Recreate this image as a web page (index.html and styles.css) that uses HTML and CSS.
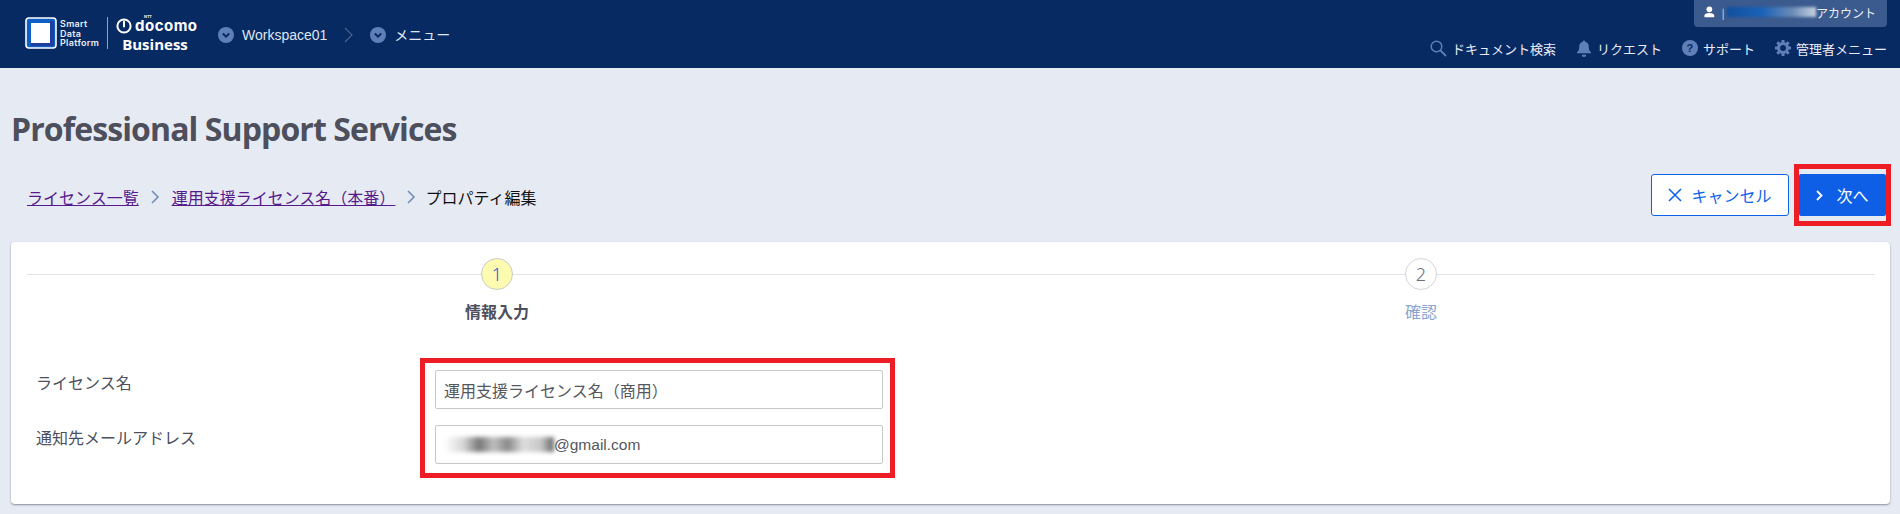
FILE: index.html
```html
<!DOCTYPE html>
<html lang="ja">
<head>
<meta charset="utf-8">
<title>Professional Support Services</title>
<link rel="stylesheet" href="styles.css">
</head>
<body>
<header class="topbar">
  <div class="brand">
    <svg class="brand-mark" width="32" height="32" viewBox="0 0 32 32"><rect x="1" y="1" width="30" height="30" rx="3" fill="#0f5fc4" stroke="#fff" stroke-width="1.6"/><path d="M25 4h2.500A1.500 1.500 0 0 1 29 5.500v22a1.500 1.500 0 0 1-1.500 1.500H6v-3h19z" fill="#1f3f9e"/><rect x="6" y="6" width="19" height="20" fill="#fff"/></svg>
    <div class="brand-name"><span>Smart</span><span>Data</span><span>Platform</span></div>
    <div class="brand-sep"></div>
    <div class="docomo">
      <div class="docomo-top"><svg width="16" height="16" viewBox="0 0 16 16"><circle cx="8" cy="8" r="6.600" fill="none" stroke="#fff" stroke-width="2"/><path d="M8 3.500v5" stroke="#fff" stroke-width="2" stroke-linecap="round"/></svg><span class="docomo-word">docomo<span class="ntt">NTT</span></span></div>
      <div class="docomo-bottom">Business</div>
    </div>
  </div>
  <nav class="crumbs-top">
    <svg class="drop" width="16" height="16" viewBox="0 0 16 16"><circle cx="8" cy="8" r="8" fill="#5f7fb8"/><path d="M4.800 6.500 8 9.700l3.200-3.200" fill="none" stroke="#0a2a63" stroke-width="2"/></svg>
    <span class="crumb-label">Workspace01</span>
    <svg class="crumb-sep" width="9" height="16" viewBox="0 0 9 16"><path d="M1 1l7 7-7 7" fill="none" stroke="#46628f" stroke-width="1.200"/></svg>
    <svg class="drop" width="16" height="16" viewBox="0 0 16 16"><circle cx="8" cy="8" r="8" fill="#5f7fb8"/><path d="M4.800 6.500 8 9.700l3.200-3.200" fill="none" stroke="#0a2a63" stroke-width="2"/></svg>
    <span class="crumb-label">メニュー</span>
  </nav>
  <div class="top-right">
    <div class="account">
      <svg width="11" height="12" viewBox="0 0 12 13"><circle cx="6" cy="3.500" r="3.200" fill="#fff"/><path d="M0.500 12.500v-2C0.500 8.500 2.500 7.500 6 7.500s5.500 1 5.500 3v2z" fill="#fff"/></svg>
      <span class="account-bar">|</span>
      <span class="account-blur"></span>
      <span class="account-name">アカウント</span>
    </div>
    <div class="tools">
      <div class="tool"><svg width="17" height="17" viewBox="0 0 17 17"><circle cx="6.500" cy="6.500" r="5.300" fill="none" stroke="#5f7fb8" stroke-width="1.500"/><path d="M10.500 10.500 16 16" stroke="#5f7fb8" stroke-width="1.800"/></svg><span>ドキュメント検索</span></div>
      <div class="tool"><svg width="16" height="17" viewBox="0 0 16 17"><path d="M8 0.500c.8 0 1.200.5 1.200 1.300 2.500.6 3.600 2.500 3.600 5 0 3 .7 4.200 2.200 5.500v1H1v-1c1.500-1.300 2.200-2.500 2.200-5.500 0-2.500 1.100-4.400 3.600-5C6.800 1 7.200.5 8 .5z" fill="#5f7fb8"/><path d="M5.800 14.800h4.400a2.200 2.200 0 0 1-4.400 0z" fill="#5f7fb8"/></svg><span>リクエスト</span></div>
      <div class="tool"><span class="help">?</span><span>サポート</span></div>
      <div class="tool"><svg width="16" height="16" viewBox="0 0 16 16"><circle cx="8" cy="8" r="4.500" fill="none" stroke="#5f7fb8" stroke-width="3"/><g stroke="#5f7fb8" stroke-width="3"><path d="M8 0v3M8 13v3M0 8h3M13 8h3M2.300 2.300l2.100 2.100M11.600 11.600l2.100 2.100M13.700 2.300l-2.100 2.100M4.400 11.600l-2.100 2.100"/></g></svg><span>管理者メニュー</span></div>
    </div>
  </div>
</header>

<main class="page">
  <h1 class="title">Professional Support Services</h1>
  <div class="action-row">
    <nav class="crumbs">
      <a class="crumb-link" href="#">ライセンス一覧</a>
      <svg class="crumb-arrow" width="9" height="14" viewBox="0 0 9 14"><path d="M1 1l6 6-6 6" fill="none" stroke="#6f8db8" stroke-width="1.600"/></svg>
      <a class="crumb-link" href="#">運用支援ライセンス名（本番）</a>
      <svg class="crumb-arrow" width="9" height="14" viewBox="0 0 9 14"><path d="M1 1l6 6-6 6" fill="none" stroke="#6f8db8" stroke-width="1.600"/></svg>
      <span class="crumb-current">プロパティ編集</span>
    </nav>
    <div class="actions">
      <button class="btn btn-cancel" type="button"><svg width="14" height="14" viewBox="0 0 14 14"><path d="M1 1l12 12M13 1 1 13" stroke="#1063e8" stroke-width="1.600"/></svg>キャンセル</button>
      <div class="next-wrap">
        <button class="btn btn-next" type="button"><svg width="7" height="11" viewBox="0 0 7 11"><path d="M1 1l4.500 4.500L1 10" fill="none" stroke="#fff" stroke-width="1.800"/></svg>次へ</button>
        <div class="mark mark-next"></div>
      </div>
    </div>
  </div>

  <section class="card">
    <div class="steps">
      <div class="step step-active"><div class="step-num">1</div><div class="step-label">情報入力</div></div>
      <div class="step"><div class="step-num">2</div><div class="step-label">確認</div></div>
    </div>
    <div class="form">
      <div class="form-labels">
        <div class="form-label">ライセンス名</div>
        <div class="form-label">通知先メールアドレス</div>
      </div>
      <div class="form-fields">
        <div class="field">運用支援ライセンス名（商用）</div>
        <div class="field field-mail"><span class="mail-blur"></span>@gmail.com</div>
        <div class="mark mark-form"></div>
      </div>
    </div>
  </section>
</main>
</body>
</html>
```

FILE: styles.css
```css
* { box-sizing: border-box; }
html, body { margin: 0; padding: 0; height: 514px; overflow: hidden; }
body {
  background: #e6eaf3;
  font-family: "Noto Sans CJK JP", "Noto Sans", sans-serif;
  font-size: 16px;
  color: #4d4f5c;
}

.topbar {
  height: 68px;
  background: #082a63;
  display: flex;
  padding-left: 25px;
  color: #e8edf6;
}
.brand { display: flex; align-items: flex-start; padding-top: 17px; }
.brand-mark { display: block; }
.brand-name {
  display: flex; flex-direction: column;
  margin-left: 3px; margin-top: 2px;
  font: 600 9px/9.600px Inter, "Liberation Sans", sans-serif;
  letter-spacing: 0.300px;
  color: #e8edf6;
  width: 40px;
}
.brand-sep { width: 1px; height: 32px; background: #8fa3c4; margin-left: 7px; }
.docomo { margin-left: 8px; color: #fff; width: 82px; }
.docomo-top { display: flex; align-items: center; gap: 3px; height: 17px; }
.docomo-word { position: relative; font: 700 15px/13px Inter, "Liberation Sans", sans-serif; letter-spacing: 0.500px; }
.ntt { position: absolute; left: 9px; top: -4px; font: 700 4px/4px "Liberation Sans", sans-serif; letter-spacing: 0; }
.docomo-bottom { font: 700 15px/17px "Open Sans", sans-serif; text-align: center; margin-top: 2px; padding-right: 4px; }

.crumbs-top { display: flex; align-items: center; margin-left: 20px; height: 68px; padding-top: 2px; }
.crumb-label { font: 14px/20px "Liberation Sans", "Noto Sans CJK JP", sans-serif; color: #dfe6f2; margin-left: 8px; }
.crumb-sep { margin: 0 17px 0 17px; }

.top-right { margin-left: auto; padding-right: 13px; display: flex; flex-direction: column; align-items: flex-end; }
.account {
  width: 193px; height: 27px;
  background: #3b5a8e;
  border-radius: 0 0 4px 4px;
  display: flex; align-items: center;
  padding: 0 11px 3px 10px;
  font-size: 12px;
  color: #e8edf6;
}
.account-bar { margin-left: 7px; font-size: 10px; }
.account-blur {
  width: 91px; height: 10px; margin-left: 3px;
  background: linear-gradient(90deg, #11509f, #1b62b8 40%, #6f8fb6 75%, #c9d3e3);
  filter: blur(1.500px);
}
.account-name { margin-left: auto; white-space: nowrap; }
.tools { display: flex; gap: 20px; margin-top: 8px; height: 26px; align-items: center; }
.tool { display: flex; align-items: center; gap: 5px; font-size: 13px; color: #e8edf6; }
.help {
  width: 16px; height: 16px; border-radius: 50%;
  background: #5f7fb8; color: #082a63;
  font: 700 11px/16px "Liberation Sans", sans-serif; text-align: center;
}

.page { padding: 0 14px 0 11px; }
.title {
  margin: 0; padding-top: 39px;
  font: 700 32px/44px "Open Sans", "Noto Sans", sans-serif;
  letter-spacing: -0.900px;
  color: #4d4f5c;
}
.action-row { display: flex; justify-content: space-between; align-items: flex-start; margin-top: 23px; }
.crumbs { display: flex; align-items: center; padding-left: 16px; margin-top: 9px; height: 28px; }
.crumb-link { color: #551a8b; text-decoration: underline; }
.crumb-arrow { margin: 0 12px; }
.crumb-current { color: #111; margin-left: -3px; }
.actions { display: flex; gap: 10px; }
.btn {
  height: 42px; font: 16px/20px "Noto Sans CJK JP", sans-serif;
  display: flex; align-items: center; justify-content: center; cursor: pointer;
}
.btn-cancel { width: 138px; background: #fff; color: #1063e8; border: 1px solid #1063e8; border-radius: 3px; gap: 9px; }
.btn-next { width: 87px; background: #0f5fe6; color: #fff; border: 0; border-radius: 2px; gap: 13px; }
.next-wrap { position: relative; }
.mark { position: absolute; border: 5px solid #ee1c25; pointer-events: none; }
.mark-next { left: -5px; top: -10px; right: -5px; bottom: -10px; }

.card {
  margin: 26px -4px 0 0; height: 262px;
  background: #fff; border-radius: 4px;
  box-shadow: 0 1px 2px rgba(60, 66, 90, .55);
  padding: 16px 15px 0 16px;
}
.steps {
  display: grid; grid-template-columns: 924px 924px;
  background: linear-gradient(#e2e3ea, #e2e3ea) 0 16px / 100% 1px no-repeat;
  padding-left: 8px;
}
.step { display: flex; flex-direction: column; align-items: center; }
.step-num {
  width: 32px; height: 32px; border-radius: 50%;
  background: #fff; border: 1px solid #d5d6dc;
  font: 300 18px/30px "Noto Sans", sans-serif; text-align: center; color: #6c6e7a;
}
.step-label { margin-top: 10px; line-height: 22px; color: #8ba4d0; }
.step-active .step-num { background: #fdfbb0; color: #2a55d8; border-color: #ccc; }
.step-active .step-label { color: #4d4f5c; font-weight: 700; }

.form { display: flex; align-items: flex-start; margin-top: 48px; }
.form-labels { width: 408px; padding: 1px 0 0 9px; }
.form-label { height: 55px; line-height: 22px; }
.form-fields { position: relative; display: flex; flex-direction: column; gap: 16px; width: 448px; }
.field {
  height: 39px; border: 1px solid #c8c8cc; border-radius: 2px;
  padding-left: 8px; color: #55575f; display: flex; align-items: center;
}
.field-mail { font: 15.500px/22px "Liberation Sans", sans-serif; }
.mail-blur {
  width: 110px; height: 15px;
  background: linear-gradient(90deg, #fff, #d5d5d5 18%, #777 32%, #c0c0c0 45%, #8a8a8a 58%, #ddd 72%, #c8c8c8 88%, #666);
  filter: blur(2px);
}
.mark-form { left: -15px; top: -12px; right: -12px; bottom: -14px; }
```
